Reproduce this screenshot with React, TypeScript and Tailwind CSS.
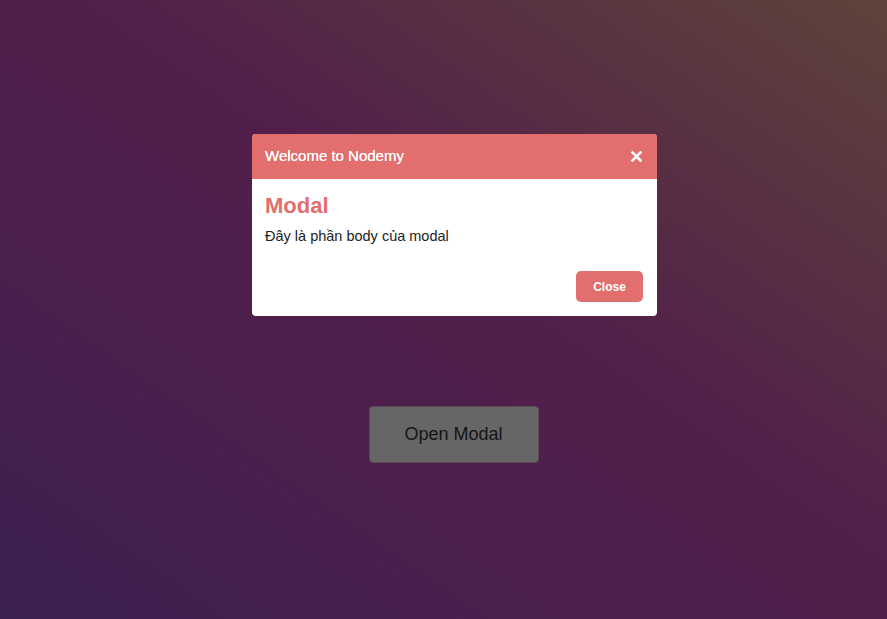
import { useState } from "react";

export default function App() {
  const [open, setOpen] = useState(true);

  return (
    <main className="relative min-h-screen w-full bg-[linear-gradient(to_top_right,#3a2050_0%,#4d1f4c_35%,#521f4a_55%,#5e433a_100%)] font-['Liberation_Sans',Arial,sans-serif]">
      <div className="flex flex-col items-center pl-5 pt-[406px]">
        <button
          onClick={() => setOpen(true)}
          className="w-[170px] h-[57px] rounded-[4px] bg-[#666666] text-[18px] text-[#151515] border border-[#5a4a5a]"
        >
          Open Modal
        </button>
      </div>

      {open && (
        <div className="absolute inset-0 flex justify-center pl-[22px] pt-[134px]">
          <div className="w-[405px] h-[182px] bg-white rounded-[4px] overflow-hidden flex flex-col">
            <div className="h-[45px] bg-[#e36e6e] px-[13px] flex items-center justify-between">
              <h3 className="text-[15px] text-white [text-shadow:0_0_0.3px_white]">Welcome to Nodemy</h3>
              <button onClick={() => setOpen(false)} className="w-[14px] h-[14px] mr-[1px] flex items-center justify-center">
                <svg width="11" height="11" viewBox="0 0 11 11">
                  <path d="M1.5 1.5 L9.5 9.5 M9.5 1.5 L1.5 9.5" stroke="white" strokeWidth="2.6" strokeLinecap="square" />
                </svg>
              </button>
            </div>
            <div className="flex-1 px-[13px] pt-[13px] pb-[14px] pr-[14px] flex flex-col">
              <h2 className="text-[22px] leading-[28px] font-bold text-[#e36e6e]">Modal</h2>
              <p className="mt-[6px] text-[14.5px] leading-[20px] text-[#222222]">Đây là phần body của modal</p>
              <div className="mt-auto flex justify-end">
                <button
                  onClick={() => setOpen(false)}
                  className="w-[67px] h-[31px] rounded-[5px] bg-[#e36e6e] text-white text-[12px] font-bold"
                >
                  Close
                </button>
              </div>
            </div>
          </div>
        </div>
      )}
    </main>
  );
}
